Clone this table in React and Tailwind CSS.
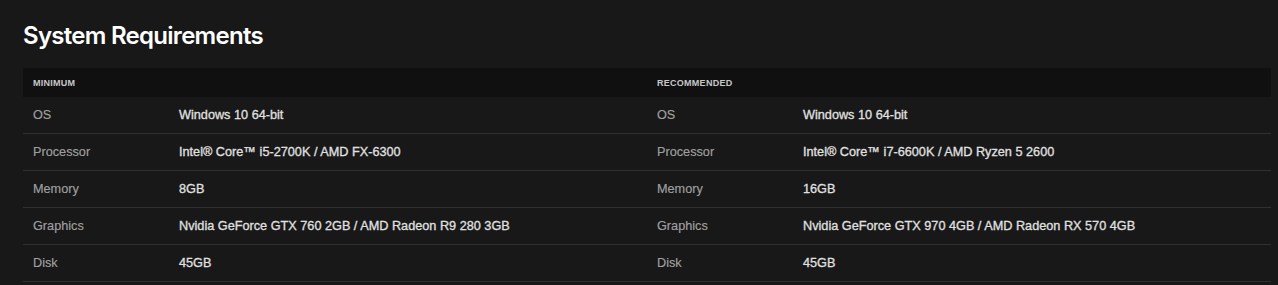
import React from 'react';

const rows = [
  ['OS', 'Windows 10 64-bit', 'Windows 10 64-bit'],
  ['Processor', 'Intel® Core™ i5-2700K / AMD FX-6300', 'Intel® Core™ i7-6600K / AMD Ryzen 5 2600'],
  ['Memory', '8GB', '16GB'],
  ['Graphics', 'Nvidia GeForce GTX 760 2GB / AMD Radeon R9 280 3GB', 'Nvidia GeForce GTX 970 4GB / AMD Radeon RX 570 4GB'],
  ['Disk', '45GB', '45GB'],
];

const Cell = ({ label, value }) => (
  <div className="grid grid-cols-[146px_1fr] items-center pl-[10px] pt-[2px]">
    <span className="text-[#a0a0a0] [-webkit-text-stroke:0.15px_#a0a0a0]">{label}</span>
    <span className="text-[#e0e0e0] [-webkit-text-stroke:0.3px_#e0e0e0]">{value}</span>
  </div>
);

const App = () => {
  return (
    <div className="w-[1278px] h-[285px] bg-[#181818] pl-[23px] pr-[7px] pt-5 overflow-hidden">
      <h2 className="font-['Inter',sans-serif] text-2xl font-semibold text-white tracking-[-0.03em] leading-8">
        System Requirements
      </h2>
      <div className="mt-4 font-['Liberation_Sans',Arial,sans-serif]">
        <div className="grid grid-cols-2 h-[29px] items-center pt-[2px] bg-[#101010] text-[9px] font-bold tracking-[0.03em] text-[#c8c8c8] uppercase">
          <span className="pl-[10px]">Minimum</span>
          <span className="pl-[10px]">Recommended</span>
        </div>
        {rows.map(([label, min, rec]) => (
          <div key={label} className="grid grid-cols-2 h-[37px] border-b border-[#303030] text-[12.7px]">
            <Cell label={label} value={min} />
            <Cell label={label} value={rec} />
          </div>
        ))}
      </div>
    </div>
  );
};

export default App;
